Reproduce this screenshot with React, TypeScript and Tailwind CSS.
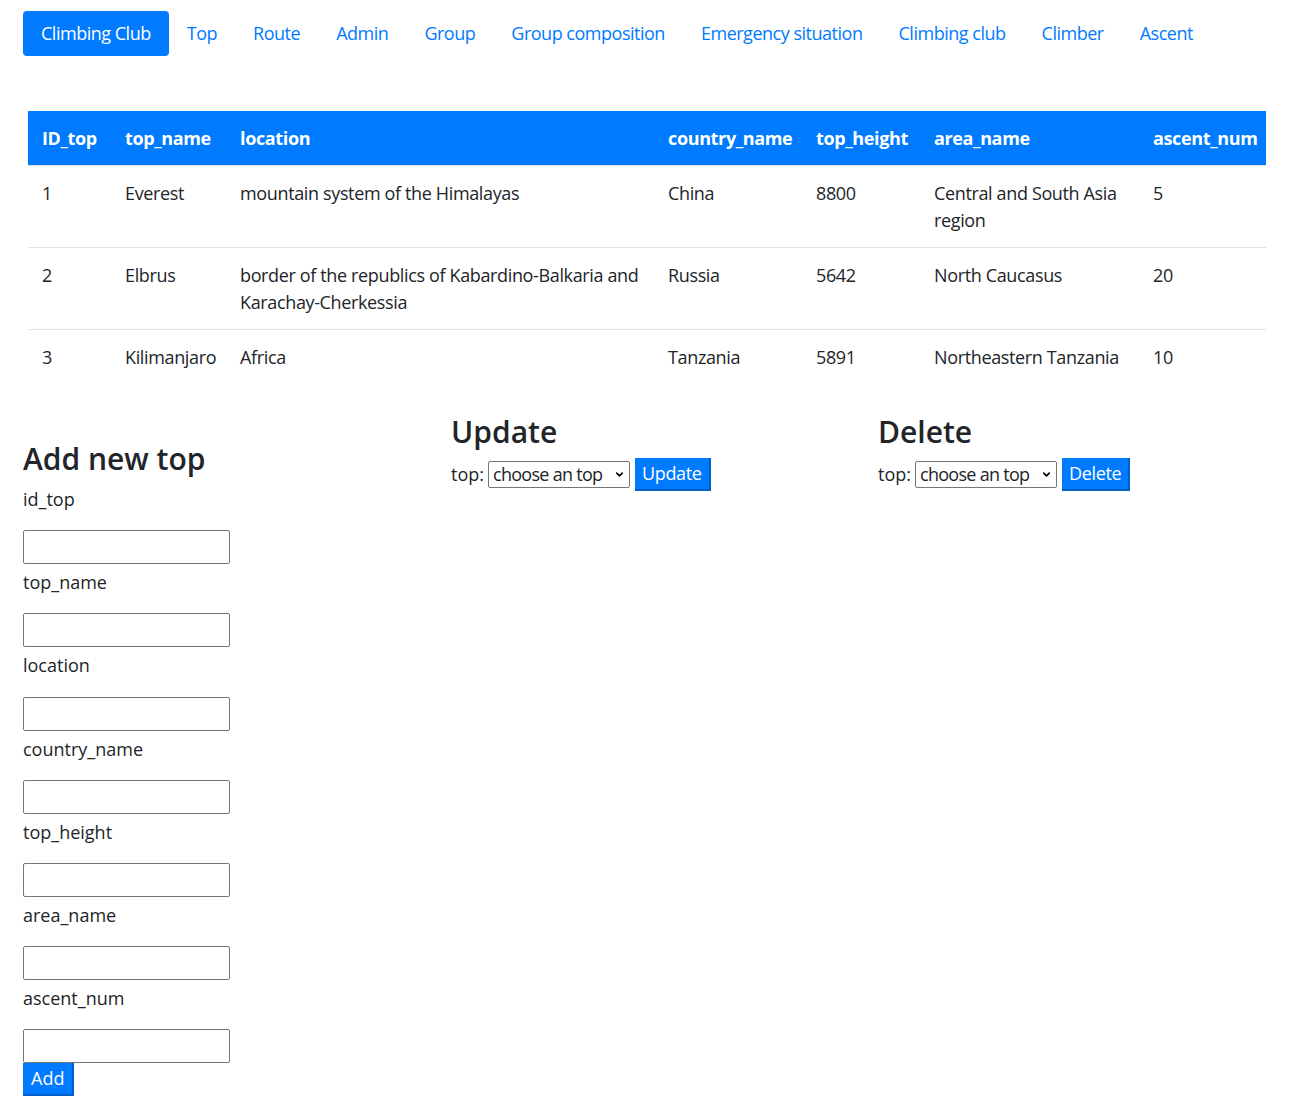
import React from 'react';
import { ChevronDown } from 'lucide-react';

interface Top {
    id: number;
    name: string;
    location: string;
    country: string;
    height: number;
    area: string;
    ascents: number;
}

const tops: Top[] = [
    { id: 1, name: 'Everest', location: 'mountain system of the Himalayas', country: 'China', height: 8800, area: 'Central and South Asia region', ascents: 5 },
    { id: 2, name: 'Elbrus', location: 'border of the republics of Kabardino-Balkaria and Karachay-Cherkessia', country: 'Russia', height: 5642, area: 'North Caucasus', ascents: 20 },
    { id: 3, name: 'Kilimanjaro', location: 'Africa', country: 'Tanzania', height: 5891, area: 'Northeastern Tanzania', ascents: 10 },
];

const navItems = ['Top', 'Route', 'Admin', 'Group', 'Group composition', 'Emergency situation', 'Climbing club', 'Climber', 'Ascent'];

const columns = [
    { label: 'ID_top', width: 'w-[83px]' },
    { label: 'top_name', width: 'w-[115px]' },
    { label: 'location', width: 'w-[428px]' },
    { label: 'country_name', width: 'w-[148px]' },
    { label: 'top_height', width: 'w-[118px]' },
    { label: 'area_name', width: 'w-[219px]' },
    { label: 'ascent_num', width: 'w-[127px]' },
];

const addFields = ['id_top', 'top_name', 'location', 'country_name', 'top_height', 'area_name', 'ascent_num'];

const TopSelect: React.FC = () => (
    <div className="relative ml-[4px]">
        <select className="appearance-none w-[142px] h-[27px] border border-[#767676] rounded-[2px] bg-white pl-[4px] pr-[16px] text-[18px] leading-[25px] tracking-[-0.04em] text-[#212529]">
            <option>choose an top</option>
            {tops.map(t => (
                <option key={t.id}>{t.name}</option>
            ))}
        </select>
        <ChevronDown className="absolute right-[5px] top-[8px] w-[11px] h-[11px] text-black pointer-events-none" strokeWidth={3.5} />
    </div>
);

const ActionPanel: React.FC<{ title: string; action: string; className?: string }> = ({ title, action, className }) => (
    <div className={`pt-[28px] ${className ?? ''}`}>
        <h2 className="text-[30px] leading-[40px] font-semibold text-[#212529]">{title}</h2>
        <div className="flex items-center mt-[6px]">
            <span className="text-[18px] leading-[27px]">top:</span>
            <TopSelect />
            <button className="ml-[5px] h-[33px] px-[7px] bg-[#007bff] text-white text-[18px] leading-[27px] tracking-[-0.02em] border-r-2 border-b-2 border-[#0060c8]">
                {action}
            </button>
        </div>
    </div>
);

export default function App() {
    return (
        <div className="min-h-[1107px] bg-white px-[23px] text-[#212529] text-[18px] leading-[27px]" style={{ fontFamily: '"Open Sans", "Noto Sans", sans-serif' }}>
            <nav className="flex pt-[11px] tracking-[-0.027em]">
                <a className="px-[18px] py-[9px] rounded-[4px] bg-[#007bff] text-white">Climbing Club</a>
                {navItems.map(item => (
                    <a key={item} className="px-[18px] py-[9px] text-[#007bff]">{item}</a>
                ))}
            </nav>

            <table className="table-fixed w-[1238px] mx-[5px] mt-[55px] border-collapse text-left tracking-[-0.02em]">
                <colgroup>
                    {columns.map(c => (
                        <col key={c.label} className={c.width} />
                    ))}
                </colgroup>
                <thead>
                    <tr className="bg-[#007bff] text-white">
                        {columns.map(c => (
                            <th key={c.label} className="px-[14px] py-[13.5px] font-bold align-top">{c.label}</th>
                        ))}
                    </tr>
                </thead>
                <tbody>
                    {tops.map(t => (
                        <tr key={t.id} className="border-t border-[#dee2e6]">
                            <td className="px-[14px] py-[13.5px] align-top">{t.id}</td>
                            <td className="px-[14px] py-[13.5px] align-top">{t.name}</td>
                            <td className="px-[14px] py-[13.5px] align-top">{t.location}</td>
                            <td className="px-[14px] py-[13.5px] align-top">{t.country}</td>
                            <td className="px-[14px] py-[13.5px] align-top">{t.height}</td>
                            <td className="px-[14px] py-[13.5px] align-top">{t.area}</td>
                            <td className="px-[14px] py-[13.5px] align-top">{t.ascents}</td>
                        </tr>
                    ))}
                </tbody>
            </table>

            <div className="flex items-start">
                {/* Add form */}
                <div className="w-[428px] shrink-0 pt-[55px]">
                    <h2 className="text-[30px] leading-[40px] font-semibold">Add new top</h2>
                    <div className="mt-[7px]">
                        {addFields.map((f, i) => (
                            <div key={f}>
                                <label className={`block ${i === 0 ? '' : 'mt-[5px]'} mb-[17.2px] leading-[27px]`}>{f}</label>
                                <input type="text" className="block w-[207px] h-[34px] border border-[#767676] rounded-[2px] bg-white" />
                            </div>
                        ))}
                        <button className="h-[33px] px-[8px] bg-[#007bff] text-white text-[18px] leading-[27px] border-r-2 border-b-2 border-[#0060c8]">
                            Add
                        </button>
                    </div>
                </div>
                <ActionPanel title="Update" action="Update" className="w-[427px] shrink-0" />
                <ActionPanel title="Delete" action="Delete" className="flex-1" />
            </div>
        </div>
    );
}
